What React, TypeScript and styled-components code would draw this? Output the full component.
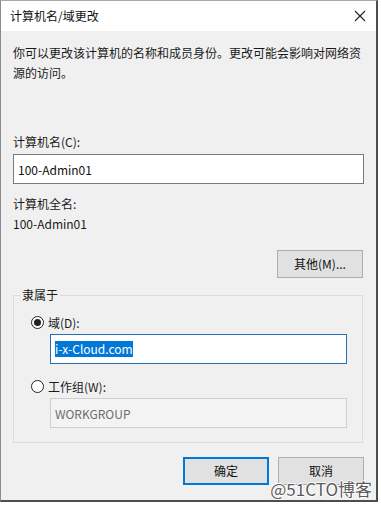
import styled, { createGlobalStyle } from "styled-components";

const FONT = `"Noto Sans CJK SC", "Noto Sans", sans-serif`;

const GlobalStyle = createGlobalStyle`
  html, body {
    margin: 0;
    padding: 0;
    background: #ffffff;
  }
  body {
    font-family: ${FONT};
    font-size: 12px;
    color: #000;
  }
`;

const App = () => {
  return (
    <>
      <GlobalStyle />
      <Window>
        <TitleBar>
          <Title>计算机名/域更改</Title>
          <CloseIcon width="12" height="12" viewBox="0 0 12 12">
            <path d="M1 1 L11 11 M11 1 L1 11" stroke="#222" strokeWidth="1.1" />
          </CloseIcon>
        </TitleBar>
        <Body>
          <Description>
            你可以更改该计算机的名称和成员身份。更改可能会影响对网络资源的访问。
          </Description>
          <FieldLabel $top={49}>计算机名(C):</FieldLabel>
          <TextBox>100-Admin01</TextBox>
          <FieldLabel $top={10}>计算机全名:</FieldLabel>
          <Value>100-Admin01</Value>
          <MoreRow>
            <Button>其他(M)...</Button>
          </MoreRow>
          <Group>
            <Legend>隶属于</Legend>
            <RadioRow>
              <Radio $checked />
              <span>域(D):</span>
            </RadioRow>
            <TextBox $focused $indent>
              <Selected>i-x-Cloud.com</Selected>
            </TextBox>
            <RadioRow $top={12}>
              <Radio />
              <span>工作组(W):</span>
            </RadioRow>
            <TextBox $disabled $indent>
              WORKGROUP
            </TextBox>
          </Group>
          <ButtonRow>
            <Button $default>确定</Button>
            <Button>取消</Button>
          </ButtonRow>
        </Body>
        <Watermark>@51CTO博客</Watermark>
      </Window>
    </>
  );
};

const Window = styled.div`
  position: relative;
  box-sizing: border-box;
  width: 378px;
  height: 502px;
  background: #f0f0f0;
  border-top: 1px solid #a8a8a8;
  border-left: 1px solid #8c8c8c;
  border-right: 2px solid #4e4e4e;
  border-bottom: 2px solid #4e4e4e;
  display: flex;
  flex-direction: column;
`;

const TitleBar = styled.div`
  height: 30px;
  background: #ffffff;
  display: flex;
  align-items: center;
  justify-content: space-between;
  padding: 0 9px 0 9px;
`;

const Title = styled.div`
  font-size: 12px;
  line-height: 16px;
  color: #111;
`;

const CloseIcon = styled.svg`
  display: block;
  margin-right: 1px;
`;

const Body = styled.div`
  display: flex;
  flex-direction: column;
  padding: 12px 12px 0 12px;
`;

const Description = styled.div`
  font-size: 12px;
  line-height: 20px;
  color: #1a1a1a;
`;

const FieldLabel = styled.div<{ $top: number }>`
  margin-top: ${(p) => p.$top}px;
  font-size: 12px;
  line-height: 20px;
  color: #1a1a1a;
`;

const TextBox = styled.div<{ $focused?: boolean; $disabled?: boolean; $indent?: boolean }>`
  box-sizing: border-box;
  height: 30px;
  margin-top: 2px;
  margin-left: ${(p) => (p.$indent ? "19px" : "0")};
  padding: 0 4px;
  display: flex;
  align-items: center;
  font-size: 12px;
  background: ${(p) => (p.$disabled ? "#f3f3f3" : "#ffffff")};
  color: ${(p) => (p.$disabled ? "#6d6d6d" : "#111")};
  border: 1px solid
    ${(p) => (p.$focused ? "#2a6db5" : p.$disabled ? "#cfcfcf" : "#7a7a7a")};
`;

const Selected = styled.span`
  background: #0078d7;
  color: #ffffff;
  line-height: 16px;
`;

const Value = styled.div`
  font-size: 12px;
  line-height: 20px;
  color: #1a1a1a;
`;

const MoreRow = styled.div`
  display: flex;
  justify-content: flex-end;
  margin-top: 16px;
  padding-right: 1px;
`;

const Button = styled.div<{ $default?: boolean }>`
  box-sizing: border-box;
  width: 86px;
  height: 28px;
  display: flex;
  align-items: center;
  justify-content: center;
  font-size: 12px;
  line-height: 16px;
  color: #111;
  background: #e1e1e1;
  border: ${(p) => (p.$default ? "2px solid #0078d7" : "1px solid #adadad")};
`;

const Group = styled.fieldset`
  margin: 7px 1px 0 0;
  padding: 7px 15px 14px 17px;
  border: 1px solid #dcdcdc;
  min-width: 0;
`;

const Legend = styled.legend`
  margin-left: -11px;
  padding: 0 2px;
  font-size: 12px;
  line-height: 20px;
  color: #1a1a1a;
`;

const RadioRow = styled.div<{ $top?: number }>`
  display: flex;
  align-items: center;
  gap: 4px;
  margin-top: ${(p) => p.$top ?? 0}px;
  height: 20px;
  font-size: 12px;
  color: #1a1a1a;
`;

const Radio = styled.span<{ $checked?: boolean }>`
  box-sizing: border-box;
  width: 13px;
  height: 13px;
  border-radius: 50%;
  border: 1px solid #222;
  background: #fff;
  display: flex;
  align-items: center;
  justify-content: center;

  &::after {
    content: "";
    width: 7px;
    height: 7px;
    border-radius: 50%;
    background: #222;
    display: ${(p) => (p.$checked ? "block" : "none")};
  }
`;

const ButtonRow = styled.div`
  display: flex;
  justify-content: flex-end;
  gap: 9px;
  margin-top: 14px;
`;

const Watermark = styled.div`
  position: absolute;
  right: 4px;
  bottom: 3px;
  font-size: 17px;
  line-height: 16px;
  color: #5a5a5a;
  text-shadow: 1px 0 0 #fff, -1px 0 0 #fff, 0 1px 0 #fff, 0 -1px 0 #fff;
`;

export default App;
